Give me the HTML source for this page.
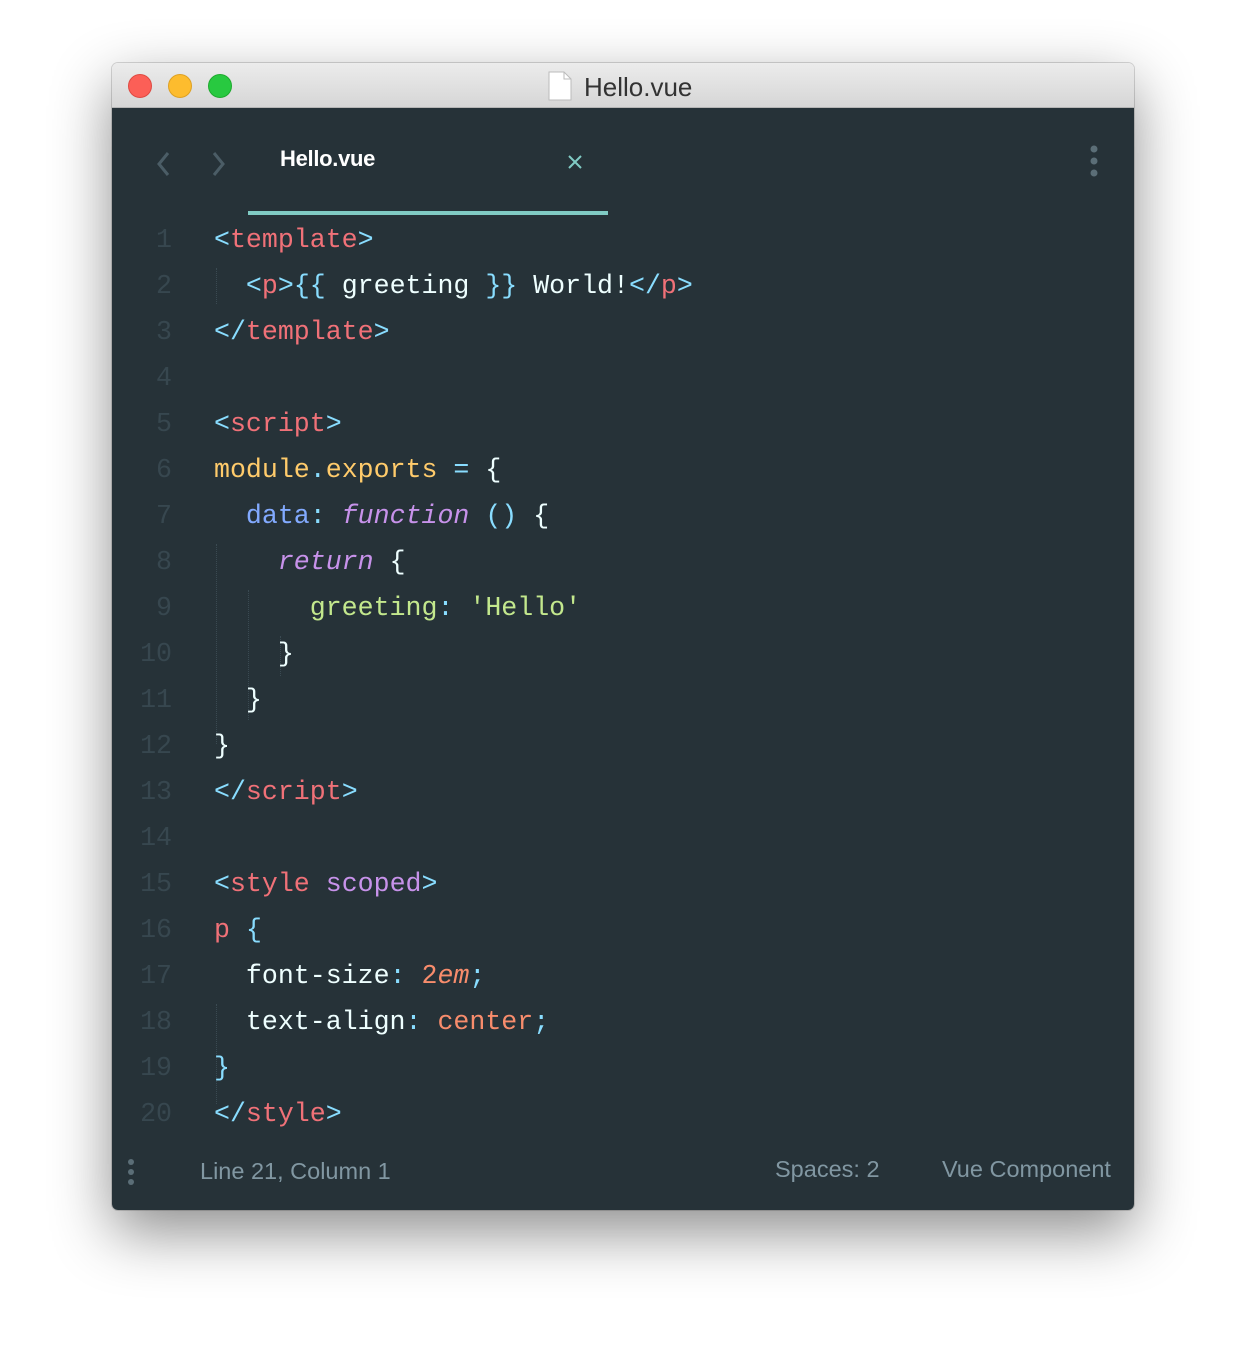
<!DOCTYPE html>
<html><head><meta charset="utf-8"><style>
body{margin:0;width:1246px;height:1370px;background:#fff;position:relative;overflow:hidden;font-family:"Liberation Sans",sans-serif}
.win{position:absolute;left:112px;top:63px;width:1022px;height:1147px;border-radius:6px;overflow:hidden;box-shadow:0 22px 60px rgba(0,0,0,.45),0 0 0 1px rgba(0,0,0,.15)}
.title{height:44px;background:linear-gradient(#ececec,#d6d6d6);border-bottom:1px solid #b5b5b5;position:relative}
.dot{position:absolute;top:11px;width:24px;height:24px;border-radius:50%}
.ttl{position:absolute;left:472px;top:9px;font-size:26px;color:#333}
.body{position:absolute;top:45px;left:0;right:0;bottom:0;background:#263238}
.code{position:absolute;left:0;top:109px;font-family:"Liberation Mono",monospace;font-size:26.6px;line-height:46px;white-space:pre;color:#eeffff}
.ln{position:absolute;left:0;width:60px;text-align:right;color:#37474f}
.tx{position:absolute;left:102px}
.r{color:#f07178}.b{color:#89ddff}.y{color:#ffcb6b}.p{color:#c792ea;font-style:italic}.g{color:#c3e88d}.o{color:#f78c6c}.bl{color:#82aaff}.pu{color:#c792ea}
.guide{position:absolute;width:0;border-left:1px dotted #3a4a52}
.sb{position:absolute;font-size:23.5px;color:#8197a2}
</style></head><body>
<div class="win">
<div class="title">
<div class="dot" style="left:16px;background:#fc5f57;border:1px solid #de4a42;box-sizing:border-box"></div>
<div class="dot" style="left:56px;background:#fdbc2e;border:1px solid #dea123;box-sizing:border-box"></div>
<div class="dot" style="left:96px;background:#28c940;border:1px solid #1eaa2e;box-sizing:border-box"></div>
<svg style="position:absolute;left:436px;top:8px" width="24" height="30"><path d="M1 1H16L23 8V29H1Z" fill="#fff" stroke="#bbb"/><path d="M16 1V8H23" fill="none" stroke="#bbb"/></svg>
<div class="ttl">Hello.vue</div>
</div>
<div class="body">
<svg style="position:absolute;left:42px;top:42px" width="80" height="30"><path d="M14 3 5 14 14 25" fill="none" stroke="#4b5d66" stroke-width="3"/><path d="M60 3 69 14 60 25" fill="none" stroke="#4b5d66" stroke-width="3"/></svg>
<div style="position:absolute;left:168px;top:38px;font-size:22px;color:#fff;font-weight:bold;letter-spacing:-0.3px">Hello.vue</div>
<svg style="position:absolute;left:455px;top:46px" width="16" height="16"><path d="M2 2 14 14M14 2 2 14" stroke="#80cbc4" stroke-width="2"/></svg>
<div style="position:absolute;left:136px;top:103px;width:360px;height:4px;background:#80cbc4"></div>
<svg style="position:absolute;left:975px;top:36px" width="14" height="36"><circle cx="7" cy="5" r="3.5" fill="#5b6e77"/><circle cx="7" cy="17" r="3.5" fill="#5b6e77"/><circle cx="7" cy="29" r="3.5" fill="#5b6e77"/></svg>
<div class="guide" style="left:104px;top:160px;height:36px"></div>
<div class="guide" style="left:104px;top:436px;height:200px"></div>
<div class="guide" style="left:136px;top:482px;height:130px"></div>
<div class="guide" style="left:168px;top:528px;height:40px"></div>
<div class="guide" style="left:104px;top:896px;height:100px"></div>
<div class="code">
<div class="ln" style="top:0">1</div><div class="tx" style="top:0"><span class="b">&lt;</span><span class="r">template</span><span class="b">&gt;</span></div>
<div class="ln" style="top:46px">2</div><div class="tx" style="top:46px">  <span class="b">&lt;</span><span class="r">p</span><span class="b">&gt;{{</span> greeting <span class="b">}}</span> World!<span class="b">&lt;/</span><span class="r">p</span><span class="b">&gt;</span></div>
<div class="ln" style="top:92px">3</div><div class="tx" style="top:92px"><span class="b">&lt;/</span><span class="r">template</span><span class="b">&gt;</span></div>
<div class="ln" style="top:138px">4</div>
<div class="ln" style="top:184px">5</div><div class="tx" style="top:184px"><span class="b">&lt;</span><span class="r">script</span><span class="b">&gt;</span></div>
<div class="ln" style="top:230px">6</div><div class="tx" style="top:230px"><span class="y">module</span><span class="b">.</span><span class="y">exports</span> <span class="b">=</span> {</div>
<div class="ln" style="top:276px">7</div><div class="tx" style="top:276px">  <span class="bl">data</span><span class="b">:</span> <span class="p">function</span> <span class="b">()</span> {</div>
<div class="ln" style="top:322px">8</div><div class="tx" style="top:322px">    <span class="p">return</span> {</div>
<div class="ln" style="top:368px">9</div><div class="tx" style="top:368px">      <span class="g">greeting</span><span class="b">:</span> <span class="g">'Hello'</span></div>
<div class="ln" style="top:414px">10</div><div class="tx" style="top:414px">    }</div>
<div class="ln" style="top:460px">11</div><div class="tx" style="top:460px">  }</div>
<div class="ln" style="top:506px">12</div><div class="tx" style="top:506px">}</div>
<div class="ln" style="top:552px">13</div><div class="tx" style="top:552px"><span class="b">&lt;/</span><span class="r">script</span><span class="b">&gt;</span></div>
<div class="ln" style="top:598px">14</div>
<div class="ln" style="top:644px">15</div><div class="tx" style="top:644px"><span class="b">&lt;</span><span class="r">style</span> <span class="pu">scoped</span><span class="b">&gt;</span></div>
<div class="ln" style="top:690px">16</div><div class="tx" style="top:690px"><span class="r">p</span> <span class="b">{</span></div>
<div class="ln" style="top:736px">17</div><div class="tx" style="top:736px">  font-size<span class="b">:</span> <span class="o">2</span><span class="o" style="font-style:italic">em</span><span class="b">;</span></div>
<div class="ln" style="top:782px">18</div><div class="tx" style="top:782px">  text-align<span class="b">:</span> <span class="o">center</span><span class="b">;</span></div>
<div class="ln" style="top:828px">19</div><div class="tx" style="top:828px"><span class="b">}</span></div>
<div class="ln" style="top:874px">20</div><div class="tx" style="top:874px"><span class="b">&lt;/</span><span class="r">style</span><span class="b">&gt;</span></div>
</div>
<svg style="position:absolute;left:14px;top:1050px" width="10" height="30"><circle cx="5" cy="4" r="3" fill="#5b6e77"/><circle cx="5" cy="14" r="3" fill="#5b6e77"/><circle cx="5" cy="24" r="3" fill="#5b6e77"/></svg>
<div class="sb" style="left:88px;top:1050px">Line 21, Column 1</div>
<div class="sb" style="left:663px;top:1048px">Spaces: 2</div>
<div class="sb" style="left:830px;top:1048px">Vue Component</div>
</div>
</div>
</body></html>
